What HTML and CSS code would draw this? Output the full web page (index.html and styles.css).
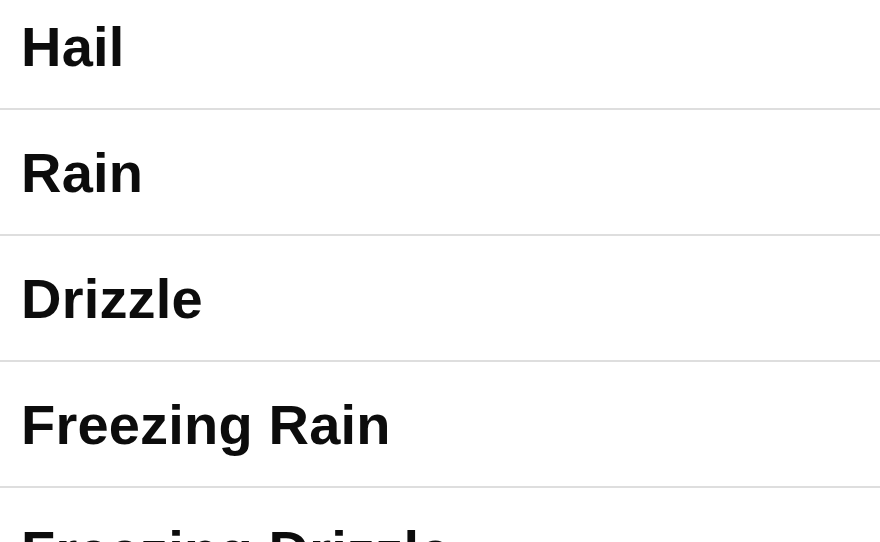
FILE: index.html
```html
<!DOCTYPE html>
<html>
<head>
<meta charset="utf-8">
<link rel="stylesheet" href="styles.css">
</head>
<body>
<ul class="list">
  <li class="row">Hail</li>
  <li class="row">Rain</li>
  <li class="row">Drizzle</li>
  <li class="row">Freezing Rain</li>
  <li class="row">Freezing Drizzle</li>
</ul>
</body>
</html>
```
FILE: styles.css
```css
html, body {
  margin: 0;
  padding: 0;
  background: #fff;
  overflow: hidden;
}
.list {
  list-style: none;
  margin: -16px 0 0 0;
  padding: 0;
}
.row {
  font-family: "Liberation Sans", Arial, sans-serif;
  font-weight: bold;
  font-size: 56px;
  line-height: 56px;
  letter-spacing: 0.2px;
  color: #0c0c0c;
  padding: 35px 0 33px 21px;
  border-bottom: 2px solid #dedede;
}
```
